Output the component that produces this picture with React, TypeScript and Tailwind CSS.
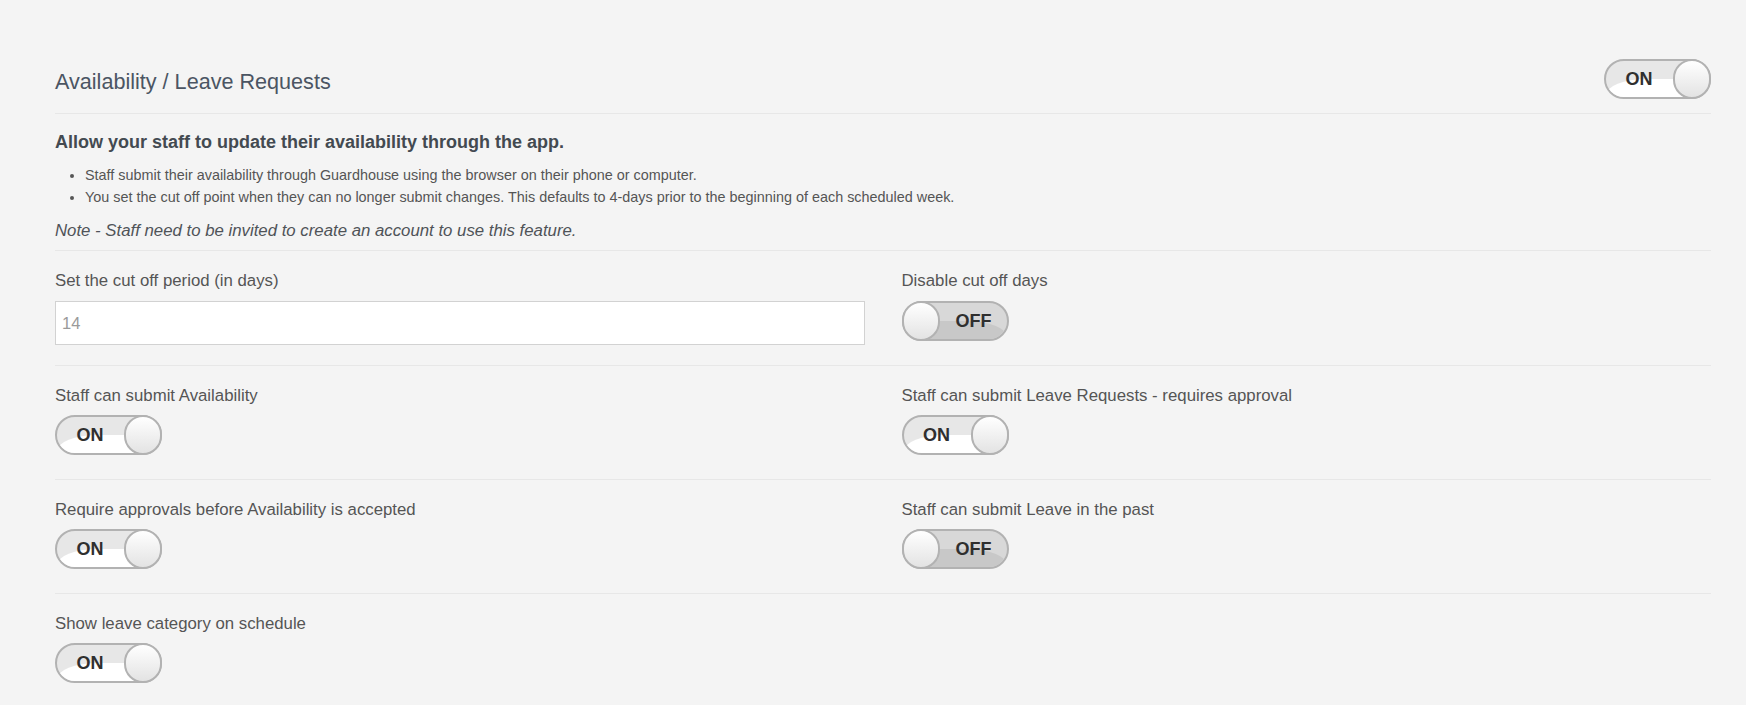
import { useState } from "react";

type SwitchProps = {
  on: boolean;
  onChange?: (v: boolean) => void;
};

// Glossy pill switch: two-tone track with a curved highlight and a round knob
function Switch({ on, onChange }: SwitchProps) {
  return (
    <button
      type="button"
      onClick={() => onChange?.(!on)}
      className="relative block h-10 w-[107px] shrink-0 cursor-pointer"
    >
      <div
        className={
          on
            ? "absolute inset-0 overflow-hidden rounded-full border-2 border-[#b2b2b2] bg-[#e7e7e7]"
            : "absolute inset-0 overflow-hidden rounded-full border-2 border-[#b2b2b2] bg-[#d8d8d8]"
        }
      >
        {on ? (
          <div className="absolute inset-x-0 bottom-0 h-[50%] rounded-tl-[40px_16px] bg-white" />
        ) : (
          <div className="absolute inset-x-0 bottom-0 h-[50%] rounded-tr-[40px_16px] bg-[#c8c8c8]" />
        )}
        <div
          className={
            on
              ? "relative flex h-full items-center justify-center pr-[37px] text-[18px] font-bold text-[#2f2f2f]"
              : "relative flex h-full items-center justify-center pl-[37px] text-[18px] font-bold text-[#2f2f2f]"
          }
        >
          {on ? "ON" : "OFF"}
        </div>
      </div>
      <div
        className={
          on
            ? "absolute top-0 right-0 h-10 w-[38px] rounded-full border-2 border-[#b2b2b2] bg-gradient-to-b from-white to-[#e3e3e3]"
            : "absolute top-0 left-0 h-10 w-[38px] rounded-full border-2 border-[#b2b2b2] bg-gradient-to-b from-white to-[#e3e3e3]"
        }
      />
    </button>
  );
}

function Field({ label, children }: { label: string; children: React.ReactNode }) {
  return (
    <div>
      <div className="text-[16.8px] leading-[22px] text-[#555]">{label}</div>
      {children}
    </div>
  );
}

type Row = [string, string | null];

const toggleRows: Row[] = [
  ["Staff can submit Availability", "Staff can submit Leave Requests - requires approval"],
  ["Require approvals before Availability is accepted", "Staff can submit Leave in the past"],
  ["Show leave category on schedule", null],
];

export default function App() {
  const [state, setState] = useState<Record<string, boolean>>({
    enabled: true,
    "Disable cut off days": false,
    "Staff can submit Availability": true,
    "Staff can submit Leave Requests - requires approval": true,
    "Require approvals before Availability is accepted": true,
    "Staff can submit Leave in the past": false,
    "Show leave category on schedule": true,
  });
  const set = (k: string) => (v: boolean) => setState((s) => ({ ...s, [k]: v }));

  return (
    <div className="min-h-screen bg-[#f4f4f4] pt-[59px] pr-[35px] pl-[55px] font-['Liberation_Sans',Arial,sans-serif]">
      {/* header */}
      <div className="flex items-start justify-between border-b border-[#e7e7e7] pb-[14px]">
        <h1 className="mt-[8px] text-[21.6px] leading-[30px] font-normal text-[#4b5563]">
          Availability / Leave Requests
        </h1>
        <Switch on={state.enabled} onChange={set("enabled")} />
      </div>

      {/* intro */}
      <div className="border-b border-[#e7e7e7] pt-[15px] pb-[8px]">
        <h2 className="text-[18px] leading-[26px] font-bold text-[#434a51]">
          Allow your staff to update their availability through the app.
        </h2>
        <ul className="mt-[9px] list-disc pl-[30px] text-[14.4px] leading-[22px] text-[#555]">
          <li>Staff submit their availability through Guardhouse using the browser on their phone or computer.</li>
          <li>
            You set the cut off point when they can no longer submit changes. This defaults to 4-days prior to the
            beginning of each scheduled week.
          </li>
        </ul>
        <p className="mt-[12px] text-[16.8px] leading-[22px] text-[#4f5358] italic">
          Note - Staff need to be invited to create an account to use this feature.
        </p>
      </div>

      {/* cut off */}
      <div className="grid grid-cols-2 gap-x-[37px] border-b border-[#e7e7e7] pt-[19px] pb-[20px]">
        <Field label="Set the cut off period (in days)">
          <input
            type="text"
            placeholder="14"
            className="mt-[9px] block h-[44px] w-full border border-[#d2d2d2] bg-white pl-[6px] text-[16.5px] text-[#555] outline-none placeholder:text-[#9a9a9a]"
          />
        </Field>
        <Field label="Disable cut off days">
          <div className="mt-[9px]">
            <Switch on={state["Disable cut off days"]} onChange={set("Disable cut off days")} />
          </div>
        </Field>
      </div>

      {toggleRows.map(([left, right], i) => (
        <div
          key={left}
          className={
            i < toggleRows.length - 1
              ? "grid grid-cols-2 gap-x-[37px] border-b border-[#e7e7e7] pt-[19px] pb-[24px]"
              : "grid grid-cols-2 gap-x-[37px] pt-[19px] pb-[24px]"
          }
        >
          <Field label={left}>
            <div className="mt-[8px]">
              <Switch on={state[left]} onChange={set(left)} />
            </div>
          </Field>
          {right && (
            <Field label={right}>
              <div className="mt-[8px]">
                <Switch on={state[right]} onChange={set(right)} />
              </div>
            </Field>
          )}
        </div>
      ))}
    </div>
  );
}
